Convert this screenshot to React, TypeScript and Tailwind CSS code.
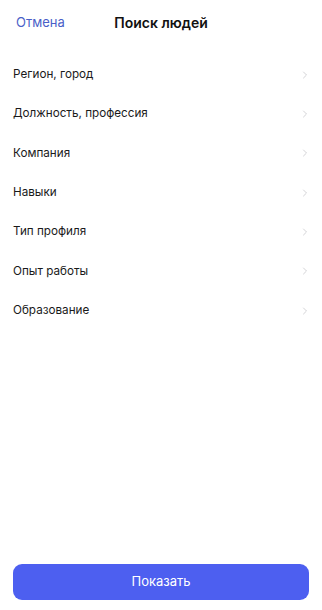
import { ChevronRight } from "lucide-react";

const filters = [
  "Регион, город",
  "Должность, профессия",
  "Компания",
  "Навыки",
  "Тип профиля",
  "Опыт работы",
  "Образование",
];

export default function App() {
  return (
    <div
      className="relative flex h-[610px] w-[322px] flex-col bg-white text-[#111] overflow-hidden"
      style={{ fontFamily: "Inter, 'Noto Sans', sans-serif" }}
    >
      {/* Header */}
      <div className="relative flex h-[44px] items-center justify-center">
        <button className="absolute left-[16px] top-[13px] text-[13px] text-[#4a5fc8]">
          Отмена
        </button>
        <h1 className="text-[14px] font-semibold">Поиск людей</h1>
      </div>

      {/* Filters */}
      <ul className="mt-[11px] flex flex-col">
        {filters.map((f) => (
          <li
            key={f}
            className="flex h-[39.33px] items-center justify-between pl-[13px] pr-[11px]"
          >
            <span className="text-[11.7px] text-[#1a1a1a]">{f}</span>
            <ChevronRight className="h-[12px] w-[12px] text-[#c4c4c8]" strokeWidth={1.5} />
          </li>
        ))}
      </ul>

      <div className="flex-1" />

      {/* Button */}
      <div className="px-[13px] pb-[10px]">
        <button className="flex h-[36px] w-full items-center justify-center rounded-[9px] bg-[#4d5ff0] text-[13px] text-white">
          Показать
        </button>
      </div>
    </div>
  );
}
